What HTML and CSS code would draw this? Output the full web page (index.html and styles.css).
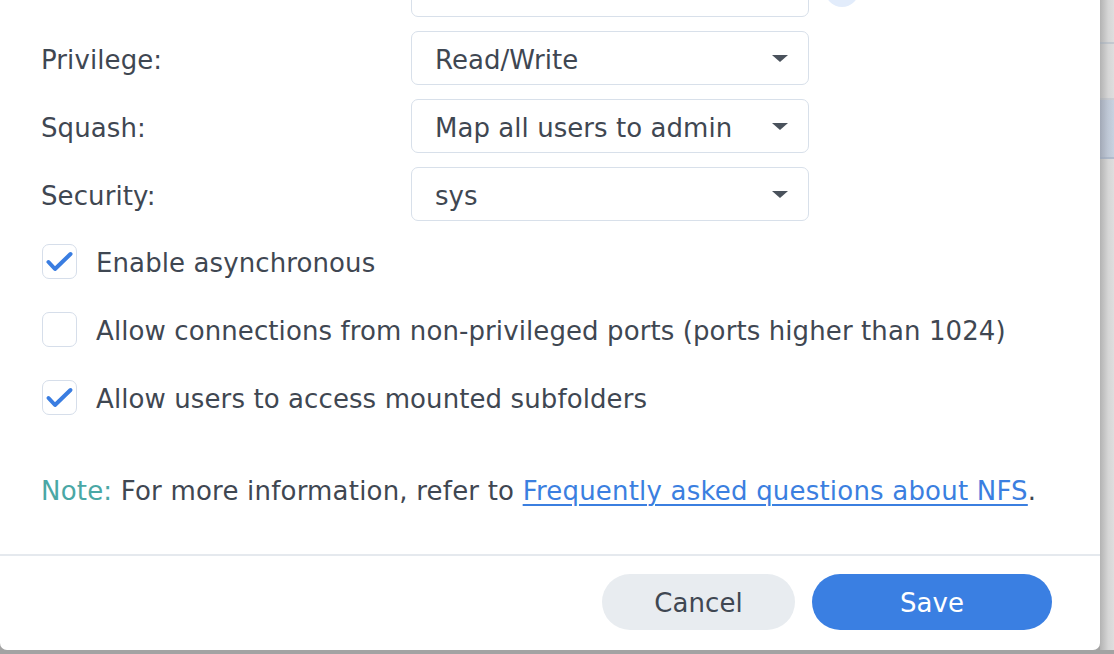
FILE: index.html
```html
<!DOCTYPE html>
<html>
<head>
<meta charset="utf-8">
<link rel="stylesheet" href="styles.css">
</head>
<body>
<div class="screen">
  <div class="dialog">
    <div class="body">
      <div class="form">
        <div class="row first">
          <div class="label">Hostname or IP:</div>
          <div class="field text"><span class="value">192.168.1.100</span></div>
          <div class="info"></div>
        </div>
        <div class="row">
          <div class="label">Privilege:</div>
          <div class="field select"><span class="value">Read/Write</span><span class="caret"></span></div>
        </div>
        <div class="row">
          <div class="label">Squash:</div>
          <div class="field select"><span class="value">Map all users to admin</span><span class="caret"></span></div>
        </div>
        <div class="row">
          <div class="label">Security:</div>
          <div class="field select"><span class="value">sys</span><span class="caret"></span></div>
        </div>
      </div>
      <div class="checks">
        <label class="check">
          <span class="box"><svg viewBox="0 0 35 35" width="35" height="35"><polyline points="6.5,18 13,25 28.5,10" fill="none" stroke="#3a7de1" stroke-width="4" stroke-linecap="round" stroke-linejoin="round"/></svg></span>
          <span class="text">Enable asynchronous</span>
        </label>
        <label class="check">
          <span class="box"></span>
          <span class="text">Allow connections from non-privileged ports (ports higher than 1024)</span>
        </label>
        <label class="check">
          <span class="box"><svg viewBox="0 0 35 35" width="35" height="35"><polyline points="6.5,18 13,25 28.5,10" fill="none" stroke="#3a7de1" stroke-width="4" stroke-linecap="round" stroke-linejoin="round"/></svg></span>
          <span class="text">Allow users to access mounted subfolders</span>
        </label>
      </div>
      <p class="note"><span class="note-label">Note:</span> For more information, refer to <a class="link" href="#">Frequently asked questions about NFS</a>.</p>
    </div>
    <div class="footer">
      <button class="btn cancel">Cancel</button>
      <button class="btn save">Save</button>
    </div>
  </div>
  <div class="side">
    <div class="side-row r1"></div>
    <div class="side-row r2"></div>
    <div class="side-row sel"></div>
    <div class="side-row r4"></div>
  </div>
</div>
</body>
</html>
```

FILE: styles.css
```css
* { box-sizing: border-box; }
html, body { margin: 0; padding: 0; }
body {
  width: 1114px;
  height: 654px;
  overflow: hidden;
  background: #a3a3a3;
  font-family: "DejaVu Sans", Verdana, sans-serif;
  color: #3f4752;
}
.screen {
  display: flex;
  height: 650px;
  overflow: hidden;
}
.dialog {
  width: 1100px;
  flex: none;
  background: #ffffff;
  border-radius: 0 0 7px 7px;
  display: flex;
  flex-direction: column;
  overflow: hidden;
}
.body {
  flex: 1;
  padding: 0 0 0 41px;
  margin-top: -37px;
}
.form {
  display: flex;
  flex-direction: column;
  gap: 14px;
}
.row {
  display: flex;
  align-items: center;
  height: 54px;
}
.label {
  width: 370px;
  font-size: 26px;
  letter-spacing: 0.1px;
  padding-top: 3px;
}
.field {
  width: 398px;
  height: 54px;
  border: 1.5px solid #d8e0ea;
  border-radius: 7px;
  display: flex;
  align-items: center;
  justify-content: space-between;
  padding: 0 20px 0 23px;
  font-size: 26px;
  letter-spacing: 0.05px;
}
.field .value { padding-top: 3px; }
.first .label { padding-top: 0; margin-top: -6px; }
.first .field .value { padding-top: 0; margin-top: -6px; }
.text .value { color: #9aa2ab; }
.caret {
  width: 0;
  height: 0;
  border-left: 8px solid transparent;
  border-right: 8px solid transparent;
  border-top: 7px solid #4a525c;
}
.info {
  width: 34px;
  height: 34px;
  border-radius: 50%;
  background: #e2ecfb;
  margin-left: 16px;
}
.checks {
  margin-top: 23px;
  display: flex;
  flex-direction: column;
  gap: 33px;
}
.check {
  display: flex;
  align-items: center;
  height: 35px;
}
.box {
  width: 35px;
  height: 35px;
  border: 1.5px solid #d6deea;
  border-radius: 7px;
  margin-left: 1px;
  flex: none;
  display: flex;
  align-items: center;
  justify-content: center;
  overflow: hidden;
}
.box svg { display: block; flex: none; }
.check .text {
  margin-left: 19px;
  font-size: 26px;
  letter-spacing: 0.1px;
  position: relative;
  top: 1px;
}
.note {
  margin: 61px 0 0 0;
  font-size: 26px;
  line-height: 30px;
  letter-spacing: 0.2px;
}
.note-label { color: #4aa7a5; }
.link {
  color: #3b7fe0;
  text-decoration: underline;
  text-decoration-thickness: 1.5px;
  text-underline-offset: 4px;
}
.footer {
  border-top: 2px solid #e5e9ee;
  display: flex;
  justify-content: flex-end;
  gap: 17px;
  padding: 18px 48px 20px 0;
}
.btn {
  height: 56px;
  border: none;
  border-radius: 28px;
  font-family: "DejaVu Sans", Verdana, sans-serif;
  font-size: 26px;
  letter-spacing: 0.1px;
  padding-top: 2px;
}
.cancel {
  width: 193px;
  background: #e8ecf0;
  color: #3f4752;
}
.save {
  width: 240px;
  background: #3a7fe2;
  color: #ffffff;
}
.side {
  flex: 1;
  display: flex;
  flex-direction: column;
  background: linear-gradient(to right, #b3b3b3, #d6d6d6 60%, #dedede);
}
.side-row { flex: none; }
.r1 { height: 44px; border-bottom: 2px solid rgba(150,165,185,0.35); }
.r2 { height: 56px; border-bottom: 2px solid rgba(150,165,185,0.25); }
.sel { height: 59px; background: linear-gradient(to right, rgba(140,155,185,0.45), rgba(190,205,225,0.7)); border-bottom: 2px solid rgba(150,165,185,0.45); }
.r4 { flex: 1; }
```
